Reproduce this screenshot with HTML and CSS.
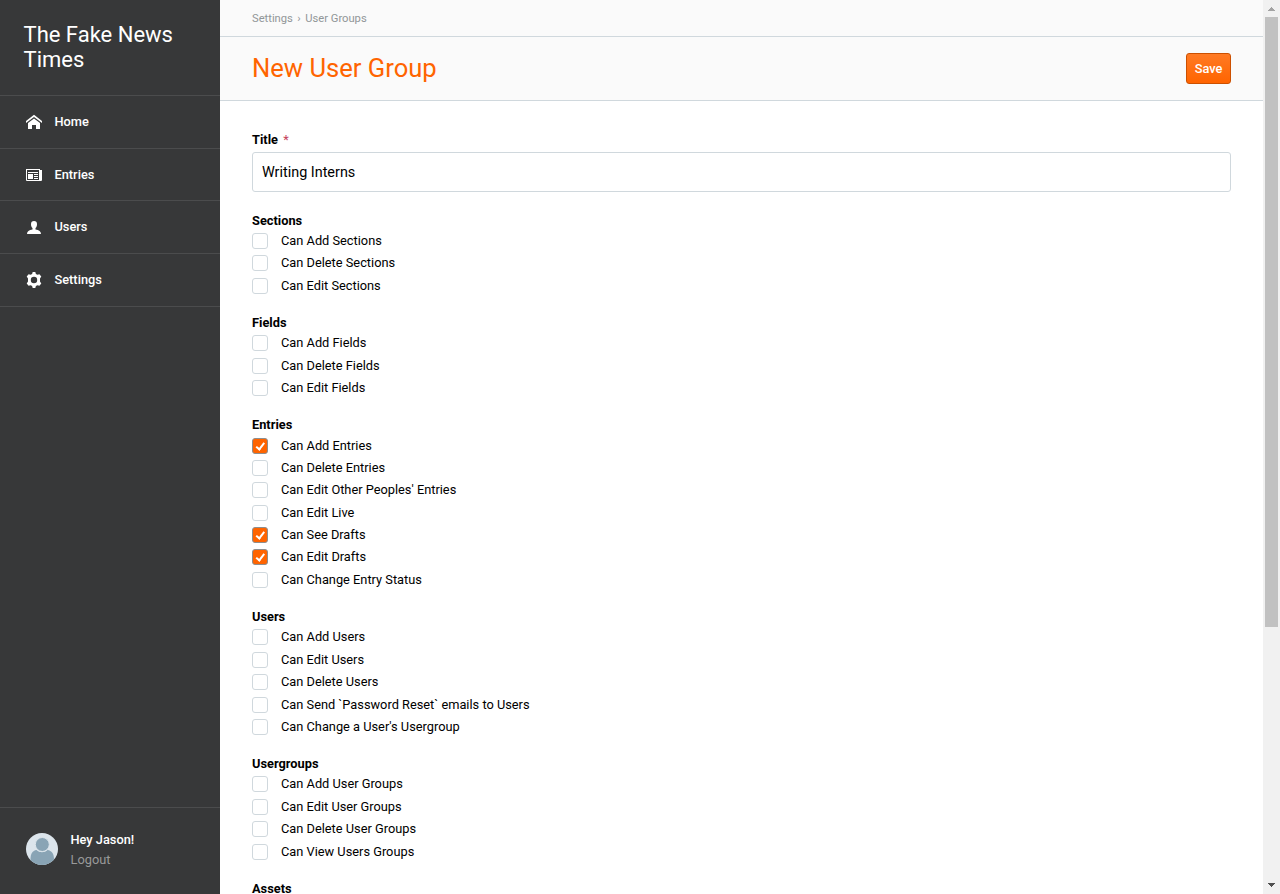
FILE: index.html
```
<!DOCTYPE html>
<html lang="en">
<head>
<meta charset="utf-8">
<title>New User Group</title>
<link rel="stylesheet" href="styles.css">
</head>
<body>
<div class="app">
  <aside class="sidebar">
    <h2 class="site-name">The Fake News Times</h2>
    <nav class="nav">
      <a class="nav-item"><svg class="icon" viewBox="0 0 16 16"><path d="M8 .8 0 7v2l8-6 8 6V7z"/><path d="M8 4.500 2 9V15h4v-4h4v4h4V9z"/></svg>Home</a>
      <a class="nav-item"><svg class="icon" viewBox="0 0 16 16"><path fill-rule="evenodd" d="M0 2h14v1h2v10q0 1-1 1H1q-1 0-1-1zM1 3v10h12V3z"/><path d="M2 5h10v1H2zM2 7h5v5H2zM8 7h4v1H8zM8 9h4v1H8zM8 11h4v1H8z"/></svg>Entries</a>
      <a class="nav-item"><svg class="icon" viewBox="0 0 16 16"><path d="M8 2C6 2 5 3.200 5 5.200c0 1.800.6 3.100 1.500 3.800v1.600C3 11.200 1 12.400 1 15h14c0-2.600-2-3.800-5.500-4.400V9C10.400 8.300 11 7 11 5.200 11 3.200 10 2 8 2z"/></svg>Users</a>
      <a class="nav-item"><svg class="icon" viewBox="0 0 16 16"><path fill-rule="evenodd" d="M6.700 0h2.600l.6 2 1.500.8 2-.6 1.900 2.400L14 6.500v3l1.300 1.900-1.900 2.400-2-.6-1.500.8-.6 2H6.700l-.6-2-1.500-.8-2 .6-1.900-2.400L2 9.500v-3L.7 4.600l1.900-2.400 2 .6L6.100 2zM8 4.800a3.200 3.200 0 1 0 0 6.400 3.200 3.200 0 0 0 0-6.400z"/></svg>Settings</a>
    </nav>
    <div class="account">
      <svg class="avatar" viewBox="0 0 32 32"><defs><clipPath id="round"><circle cx="16" cy="16" r="16"/></clipPath></defs><g clip-path="url(#round)"><path fill="#dce5ec" d="M0 0h32v32H0z"/><path fill="#89a4b5" d="M10.500 17c3 3 8 3 11 0 4.200.5 6.500 4 6.500 9v6H4.500v-6c0-5 2-8.500 6-9z"/><circle cx="16.300" cy="11.500" r="7" fill="#89a4b5" stroke="#dce5ec"/></g></svg>
      <div class="account-text"><span>Hey Jason!</span><a class="logout">Logout</a></div>
    </div>
  </aside>
  <main class="main">
    <div class="crumbs"><a>Settings</a><span>›</span><a>User Groups</a></div>
    <header class="header"><h1 class="title">New User Group</h1><button class="save">Save</button></header>
    <form class="form">
      <label class="field-label" for="title">Title <span class="required">*</span></label>
      <input class="input" id="title" value="Writing Interns">
      <section class="group"><h3>Sections</h3>
        <label><input type="checkbox">Can Add Sections</label>
        <label><input type="checkbox">Can Delete Sections</label>
        <label><input type="checkbox">Can Edit Sections</label>
      </section>
      <section class="group"><h3>Fields</h3>
        <label><input type="checkbox">Can Add Fields</label>
        <label><input type="checkbox">Can Delete Fields</label>
        <label><input type="checkbox">Can Edit Fields</label>
      </section>
      <section class="group"><h3>Entries</h3>
        <label><input type="checkbox" checked>Can Add Entries</label>
        <label><input type="checkbox">Can Delete Entries</label>
        <label><input type="checkbox">Can Edit Other Peoples' Entries</label>
        <label><input type="checkbox">Can Edit Live</label>
        <label><input type="checkbox" checked>Can See Drafts</label>
        <label><input type="checkbox" checked>Can Edit Drafts</label>
        <label><input type="checkbox">Can Change Entry Status</label>
      </section>
      <section class="group"><h3>Users</h3>
        <label><input type="checkbox">Can Add Users</label>
        <label><input type="checkbox">Can Edit Users</label>
        <label><input type="checkbox">Can Delete Users</label>
        <label><input type="checkbox">Can Send `Password Reset` emails to Users</label>
        <label><input type="checkbox">Can Change a User's Usergroup</label>
      </section>
      <section class="group"><h3>Usergroups</h3>
        <label><input type="checkbox">Can Add User Groups</label>
        <label><input type="checkbox">Can Edit User Groups</label>
        <label><input type="checkbox">Can Delete User Groups</label>
        <label><input type="checkbox">Can View Users Groups</label>
      </section>
      <section class="group"><h3>Assets</h3></section>
    </form>
  </main>
  <div class="scrollbar">
    <svg class="arrow" viewBox="0 0 17 17" shape-rendering="crispEdges"><path fill="#a3a3a3" d="M8 7h1v1H8zM7 8h3v1H7zM6 9h5v1H6zM5 10h7v1H5z"/></svg>
    <div class="thumb"></div>
    <svg class="arrow arrow-down" viewBox="0 0 17 17" shape-rendering="crispEdges"><path fill="#505050" d="M5 6h7v1H5zM6 7h5v1H6zM7 8h3v1H7zM8 9h1v1H8z"/></svg>
  </div>
</div>
</body>
</html>
```
FILE: styles.css
```
* { box-sizing: border-box; }
body { margin: 0; font: 12.8px/20px Roboto, sans-serif; color: #000; }
h1, h2, h3 { margin: 0; font-weight: 400; }
.app { display: flex; height: 894px; overflow: hidden; }
.sidebar { width: 220px; flex: none; display: flex; flex-direction: column; background: #373839; color: #fff; }
.site-name { height: 95px; padding: 22px 23.5px 0; font-size: 22px; line-height: 25px; }
.nav { border-bottom: 1px solid #4b4c4d; }
.nav-item { display: flex; align-items: center; height: 52.7px; padding-left: 26px; gap: 12.5px; border-top: 1px solid #4b4c4d; font-weight: 500; }
.icon { width: 16px; height: 16px; fill: #fff; }
.account { margin-top: auto; height: 87px; display: flex; padding: 25px 26px; gap: 12.5px; border-top: 1px solid #4b4c4d; }
.avatar { width: 32px; height: 32px; }
.account-text { display: flex; flex-direction: column; margin-top: -3px; font-weight: 500; }
.logout { color: #999a9a; font-weight: 400; }
.main { flex: 1; min-width: 0; display: flex; flex-direction: column; background: #fff; }
.crumbs { flex: none; display: flex; gap: 4.5px; height: 37px; padding: 9px 32px 0; font-size: 11.2px; line-height: 20px; color: #919698; background: #fafafa; border-bottom: 1px solid #d0d8dd; }
.header { flex: none; display: flex; align-items: center; justify-content: space-between; height: 64px; padding: 0 32px; background: #fafafa; border-bottom: 1px solid #d0d8dd; }
.title { padding-bottom: 2px; color: #ff6400; font-size: 25.6px; line-height: 32px; }
.save { width: 45px; height: 31px; padding: 0; border: 1px solid #cc5000; border-radius: 3px; background: linear-gradient(#ff7a24, #ff6400); color: #fff; font: 500 12.8px Roboto, sans-serif; }
.form { display: flex; flex-direction: column; padding: 29px 32px 0; }
.field-label { height: 22px; font-weight: 700; }
.required { margin-left: 2px; color: #c4405a; font-weight: 400; }
.input { height: 40px; border: 1px solid #d0d8dd; border-radius: 3px; padding: 0 9px; font: 14.4px Roboto, sans-serif; color: #000; }
.group { display: flex; flex-direction: column; padding-top: 18.705px; }
.group + .group { padding-top: 16px; }
.group h3 { height: 19.1px; font-size: 12.8px; font-weight: 700; }
.group label { display: flex; align-items: center; height: 22.4px; gap: 13px; }
.group input { appearance: none; flex: none; width: 16px; height: 16px; margin: 0; border: 1px solid #d0d8dd; border-radius: 3px; background: #fff; }
.group input:checked { border-color: #8e8e8e; background: #ff6400; }
.group input:checked::before { content: ""; display: block; box-sizing: border-box; width: 4.5px; height: 8.5px; margin: 2px 0 0 4.5px; border: solid #fff; border-width: 0 2px 2px 0; transform: rotate(38deg); }
.scrollbar { flex: none; width: 17px; display: flex; flex-direction: column; background: #f1f1f1; }
.arrow { width: 17px; height: 17px; }
.arrow-down { margin-top: auto; }
.thumb { height: 610px; margin: 0 2px; background: #c1c1c1; }
```
